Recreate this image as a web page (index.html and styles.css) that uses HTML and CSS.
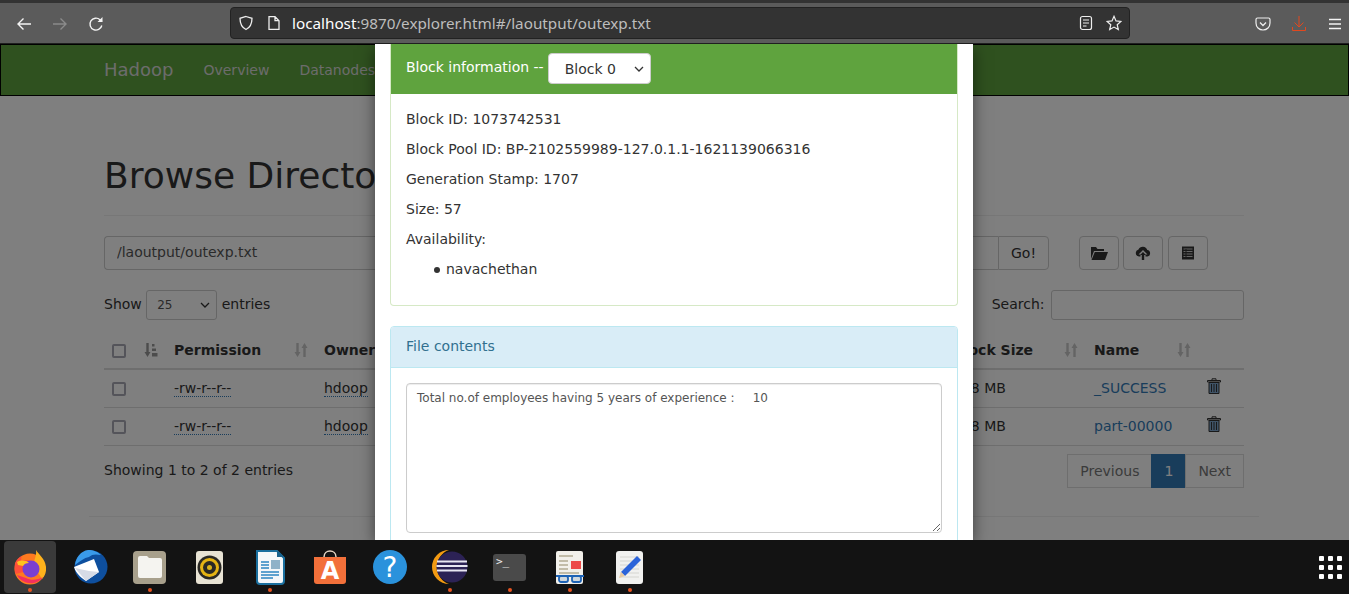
FILE: index.html
```html
<!DOCTYPE html>
<html>
<head>
<meta charset="utf-8">
<title>Browsing HDFS</title>
<link rel="stylesheet" href="styles.css">
</head>
<body>

<!-- browser toolbar -->
<div class="toolbar">
  <div class="toolbuttons">
    <svg class="tool" viewBox="0 0 16 16"><path d="M15 8H2M7.5 2.5 2 8l5.500 5.500" fill="none" stroke="#f4f4f4" stroke-width="1.400"/></svg>
    <svg class="tool" viewBox="0 0 16 16"><path d="M1 8h13M8.500 2.500 14 8l-5.500 5.500" fill="none" stroke="#8b8b8b" stroke-width="1.400"/></svg>
    <svg class="tool" viewBox="0 0 16 16"><path d="M13.800 9.500A6 6 0 1 1 12 3.700L14 5.500" fill="none" stroke="#f4f4f4" stroke-width="1.400"/><path d="M14.500 1v5h-5z" fill="#f4f4f4"/></svg>
  </div>
  <div class="urlbar">
    <svg class="urlicon" viewBox="0 0 16 16"><path d="M8 1.500 14 3.300c0 5.500-1.700 9.200-6 11.200C3.700 12.500 2 8.800 2 3.300z" fill="none" stroke="#eee" stroke-width="1.300"/></svg>
    <svg class="urlicon" viewBox="0 0 16 16"><path d="M3 1.700h6l4 4v8.600H3zM9 1.700v4h4" fill="none" stroke="#eee" stroke-width="1.300"/></svg>
    <div class="url"><b>localhost</b>:9870/explorer.html#/laoutput/outexp.txt</div>
    <svg class="urlicon" viewBox="0 0 16 16"><rect x="2.500" y="1.500" width="11" height="13" rx="2" fill="none" stroke="#eee" stroke-width="1.200"/><path d="M5 5h6M5 8h6M5 11h3.500" stroke="#eee" stroke-width="1.200"/></svg>
    <svg class="urlicon" viewBox="0 0 16 16"><path d="m8 1.300 2 4.600 4.900.5-3.700 3.300 1.100 4.900L8 12.100l-4.300 2.500 1.100-4.900L1.100 6.400 6 5.900z" fill="none" stroke="#eee" stroke-width="1.200"/></svg>
  </div>
  <div class="toolright">
    <svg class="tool" viewBox="0 0 16 16"><path d="M2.500 2h11A1.500 1.500 0 0 1 15 3.500V7c0 4-3 7-7 7S1 11 1 7V3.500A1.500 1.500 0 0 1 2.500 2z" fill="none" stroke="#eee" stroke-width="1.200"/><path d="m5 6.500 3 3 3-3" fill="none" stroke="#eee" stroke-width="1.300"/></svg>
    <svg class="tool" viewBox="0 0 16 16"><path d="M8 0v10.500M3.500 6.500 8 11l4.500-4.500M1.500 11v3.500h13V11" fill="none" stroke="#e2481e" stroke-width="1"/></svg>
    <svg class="tool" viewBox="0 0 16 16"><path d="M2 3.500h12M2 8h12M2 12.500h12" stroke="#f4f4f4" stroke-width="1.300"/></svg>
  </div>
</div>

<!-- page in the browser -->
<div class="page">
  <div class="navbar">
    <span class="brand">Hadoop</span>
    <span class="navlink">Overview</span>
    <span class="navlink">Datanodes</span>
  </div>

  <div class="container">
    <h1 class="pageheader">Browse Directory</h1>

    <div class="pathrow">
      <div class="pathgroup">
        <input class="pathinput" type="text" value="/laoutput/outexp.txt">
        <div class="gobutton">Go!</div>
      </div>
      <div class="iconbutton">
        <svg class="glyph" viewBox="0 0 18 14"><path d="M1 1h5l1.500 2H14v2H4L1 13zM4.800 6H18l-3 8H1.500z" fill="#333"/></svg>
      </div>
      <div class="iconbutton">
        <svg class="glyph" viewBox="0 0 16 14"><path d="M4 10.500A3.500 3.500 0 0 1 3.500 3.600 4.700 4.700 0 0 1 12.300 4 3.300 3.300 0 0 1 12.500 10.500H10.500V8.500h2L8 4 3.500 8.500h2v2z" fill="#333"/><path d="M8 6 11 9H9.200v5H6.800V9H5z" fill="#333"/></svg>
      </div>
      <div class="iconbutton lastbutton">
        <svg class="glyph" viewBox="0 0 14 14"><rect x="1" y="0.500" width="12" height="13" fill="#333"/><path d="M2.500 3h9M2.500 5.500h9M2.500 8h9M2.500 10.500h9" stroke="#ccc" stroke-width="1"/><path d="M5 3v9" stroke="#333"/></svg>
      </div>
    </div>

    <div class="tabletop">
      <div class="tableoption">Show
        <select class="lengthselect"><option>25</option></select>
        entries</div>
      <div class="tableoption">Search: <input class="searchinput" type="text"></div>
    </div>

    <table class="filetable">
      <colgroup>
        <col class="c1"><col class="c2"><col class="c3"><col class="c4"><col class="c5"><col class="c6"><col class="c7"><col class="c8">
      </colgroup>
      <thead>
        <tr>
          <th><input type="checkbox"></th>
          <th class="sortcell">
            <svg class="sorticon" viewBox="0 0 14 14"><path d="M3.500 0v10" stroke="#999" stroke-width="2.400"/><path d="M0.500 9h6L3.500 14zM8 1h2.500v2.500H8zM8 5.500h4v2.500H8zM8 10h5.500v3.500H8z" fill="#999"/></svg>
          </th>
          <th><div class="thcell">Permission<svg class="sorticon" viewBox="0 0 14 14"><path d="M3.500 0v10M10.500 14V4" stroke="#c8c8c8" stroke-width="2.400"/><path d="M0.500 9h6L3.500 14zM7.500 5h6L10.500 0z" fill="#c8c8c8"/></svg></div></th>
          <th>Owner</th>
          <th></th>
          <th><div class="thcell">Block Size<svg class="sorticon" viewBox="0 0 14 14"><path d="M3.500 0v10M10.500 14V4" stroke="#c8c8c8" stroke-width="2.400"/><path d="M0.500 9h6L3.500 14zM7.500 5h6L10.500 0z" fill="#c8c8c8"/></svg></div></th>
          <th><div class="thcell">Name<svg class="sorticon" viewBox="0 0 14 14"><path d="M3.500 0v10M10.500 14V4" stroke="#c8c8c8" stroke-width="2.400"/><path d="M0.500 9h6L3.500 14zM7.500 5h6L10.500 0z" fill="#c8c8c8"/></svg></div></th>
          <th></th>
        </tr>
      </thead>
      <tbody>
        <tr>
          <td><input type="checkbox"></td>
          <td></td>
          <td><span class="dotted">-rw-r--r--</span></td>
          <td><span class="dotted">hdoop</span></td>
          <td></td>
          <td>128 MB</td>
          <td><span class="filelink">_SUCCESS</span></td>
          <td><svg class="trash" viewBox="0 0 14 16"><path d="M5 2V.8h4V2M.5 2.500h13V4H.5z" fill="none" stroke="#333"/><path d="M2 4.500h10V15.500H2z" fill="#7ea6cf" stroke="#333"/><path d="M4.500 6v8M7 6v8M9.500 6v8" stroke="#333"/></svg></td>
        </tr>
        <tr>
          <td><input type="checkbox"></td>
          <td></td>
          <td><span class="dotted">-rw-r--r--</span></td>
          <td><span class="dotted">hdoop</span></td>
          <td></td>
          <td>128 MB</td>
          <td><span class="filelink">part-00000</span></td>
          <td><svg class="trash" viewBox="0 0 14 16"><path d="M5 2V.8h4V2M.5 2.500h13V4H.5z" fill="none" stroke="#333"/><path d="M2 4.500h10V15.500H2z" fill="#7ea6cf" stroke="#333"/><path d="M4.500 6v8M7 6v8M9.500 6v8" stroke="#333"/></svg></td>
        </tr>
      </tbody>
    </table>

    <div class="tablebottom">
      <div class="tableinfo">Showing 1 to 2 of 2 entries</div>
      <div class="pagination">
        <span class="pagebtn">Previous</span><span class="pagebtn current">1</span><span class="pagebtn">Next</span>
      </div>
    </div>
  </div>
  <div class="footerline"></div>

  <!-- modal on top of the dimmed page -->
  <div class="backdrop"></div>
  <div class="modal">
    <div class="panel success">
      <div class="panelhead greenhead">
        <span class="blocklabel">Block information --</span>
        <select class="blockselect"><option>Block 0</option></select>
      </div>
      <div class="panelbody">
        <p>Block ID: 1073742531</p>
        <p>Block Pool ID: BP-2102559989-127.0.1.1-1621139066316</p>
        <p>Generation Stamp: 1707</p>
        <p>Size: 57</p>
        <p>Availability:</p>
        <ul><li>navachethan</li></ul>
      </div>
    </div>
    <div class="panel info">
      <div class="panelhead bluehead">File contents</div>
      <div class="panelbody">
        <textarea class="contents">Total no.of employees having 5 years of experience :	10</textarea>
      </div>
    </div>
  </div>
</div>

<!-- ubuntu dock -->
<div class="dock">
  <div class="dockitem running selected">
    <svg class="dockicon" viewBox="0 0 36 36">
      <circle cx="18" cy="20" r="15.500" fill="#ff7a1f"/>
      <path d="M24 1c2 4 9 8 10 17 .500 5-1 9-4 12l-8-13c-1-6 3-9 2-16z" fill="#ffb21c"/>
      <path d="M3 14c2-4 4-6 7-7-1 2-1 3-.5 5 3-2 9-1 11 1l-9 10-8 2c-1-4-1-8-.5-11z" fill="#ff4f3a"/>
      <circle cx="19" cy="20" r="8.500" fill="#7a3fd0"/>
      <path d="M5 13c4-2 9-2 12 1-3 0-5 1-6 3l-5-1z" fill="#ffc21f"/>
      <path d="M5 26c3 6 10 9 17 8 4-1 7-3 9-6-5 3-12 4-17 1-3-1-6-2-9-3z" fill="#f3305f"/>
    </svg>
  </div>
  <div class="dockitem">
    <svg class="dockicon" viewBox="0 0 36 36">
      <circle cx="19" cy="18" r="16.500" fill="#0e4f9e"/>
      <path d="M3 16C4 8 9 2 16 1c6 0 10 2 13 5-5-1-9-1-12 2-5 1-9 4-14 8z" fill="#3a9bea"/>
      <path d="M2 18 22 10l5 13-13 9C8 28 4 24 2 18z" fill="#fff"/>
      <path d="M3 19l14 3 10 1-13 9z" fill="#d6dbe6"/>
    </svg>
  </div>
  <div class="dockitem running">
    <svg class="dockicon" viewBox="0 0 36 36">
      <rect x="1" y="2" width="33" height="33" rx="4" fill="#a8a08c"/>
      <path d="M6 9a2 2 0 0 1 2-2h7l2 2h11a2 2 0 0 1 2 2v16a2 2 0 0 1-2 2H8a2 2 0 0 1-2-2z" fill="#f5f4f0"/>
    </svg>
  </div>
  <div class="dockitem">
    <svg class="dockicon" viewBox="0 0 36 36">
      <rect x="4" y="2" width="27" height="33" rx="3" fill="#e8e3d4"/>
      <circle cx="17.500" cy="18.500" r="12" fill="#2a2925"/>
      <circle cx="17.500" cy="18.500" r="9.500" fill="#e5b414"/>
      <circle cx="17.500" cy="18.500" r="6.500" fill="#2a2925"/>
      <circle cx="17.500" cy="18.500" r="2.500" fill="#d9b31c"/>
    </svg>
  </div>
  <div class="dockitem running">
    <svg class="dockicon" viewBox="0 0 36 36">
      <path d="M5 2h20l7 7v23a3 3 0 0 1-3 3H8a3 3 0 0 1-3-3z" fill="#f4f7f9" stroke="#1a6f9e" stroke-width="2"/>
      <path d="M25 1l7 7h-7z" fill="#17618c"/>
      <path d="M9 13h8M9 16h8M9 19h8M9 23h18M9 26h18M9 29h12" stroke="#2d86c1" stroke-width="1.600"/>
      <rect x="19" y="11" width="9" height="9" fill="#8fb2c8"/>
    </svg>
  </div>
  <div class="dockitem">
    <svg class="dockicon" viewBox="0 0 36 36">
      <path d="M12 8c0-8 12-8 12 0" fill="none" stroke="#e4d5c4" stroke-width="1.500"/>
      <path d="M2 8h32v24a3 3 0 0 1-3 3H5a3 3 0 0 1-3-3z" fill="#f2703a"/>
      <text class="softa" x="18" y="30" text-anchor="middle">A</text>
    </svg>
  </div>
  <div class="dockitem">
    <svg class="dockicon" viewBox="0 0 36 36">
      <circle cx="18" cy="18" r="17" fill="#2a92dc"/>
      <text class="helpq" x="18" y="28" text-anchor="middle">?</text>
    </svg>
  </div>
  <div class="dockitem running">
    <svg class="dockicon" viewBox="0 0 36 36">
      <path d="M17 1A17 17 0 0 0 17 35 18 18 0 0 1 17 1z" fill="#f29a12"/>
      <circle cx="20" cy="18" r="15.500" fill="#2c2255"/>
      <path d="M5 12.500h30M4.500 17h31M5 21.500h30" stroke="#e8e6f2" stroke-width="1.800"/>
    </svg>
  </div>
  <div class="dockitem running">
    <svg class="dockicon" viewBox="0 0 36 36">
      <rect x="1" y="5" width="33" height="27" rx="3" fill="#4a4a4a"/>
      <text class="termtext" x="4" y="16">&gt;_</text>
    </svg>
  </div>
  <div class="dockitem running">
    <svg class="dockicon" viewBox="0 0 36 36">
      <rect x="4" y="2" width="27" height="33" rx="2" fill="#f2f0ea"/>
      <path d="M7 7h14M7 12h9M7 16h9M7 20h9M7 24h20" stroke="#b3aa92" stroke-width="1.500"/>
      <rect x="19" y="12" width="10" height="8" fill="#ec4a48"/>
      <path d="M4 27h28" stroke="#1e63b5" stroke-width="2"/>
      <rect x="7" y="27" width="9" height="6" rx="2" fill="#cfd8de" stroke="#1e63b5" stroke-width="1.800"/>
      <rect x="20" y="27" width="9" height="6" rx="2" fill="#cfd8de" stroke="#1e63b5" stroke-width="1.800"/>
    </svg>
  </div>
  <div class="dockitem running">
    <svg class="dockicon" viewBox="0 0 36 36">
      <rect x="4" y="2" width="27" height="33" rx="3" fill="#f1f1ef"/>
      <path d="M8 8h19M8 12h19M8 16h19M8 20h19M8 24h19M8 28h19" stroke="#d5d5d0"/>
      <path d="M25 7l4 4-16 16-4-4z" fill="#2b63d9"/>
      <path d="M9 23l4 4-6 2z" fill="#e8c9a0"/>
    </svg>
  </div>
  <div class="appgrid">
    <i></i><i></i><i></i><i></i><i></i><i></i><i></i><i></i><i></i>
  </div>
</div>

</body>
</html>
```

FILE: styles.css
```css
html, body
{
  margin: 0;
  padding: 0;
  height: 594px;
  overflow: hidden;
  font-family: "DejaVu Sans", sans-serif;
  font-size: 14px;
  line-height: 20px;
  color: #333;
  background-color: #fff;
}

/* Browser toolbar */

.toolbar
{
  box-sizing: border-box;
  height: 44px;
  display: flex;
  align-items: center;
  padding: 3px 0 1px 0;
  background-color: #5b5b5b;
  border-top: 3px solid #333;
  border-bottom: 1px solid #1f1f1f;
}

.toolbuttons
{
  width: 230px;
  display: flex;
  gap: 20px;
  padding-left: 16px;
  box-sizing: border-box;
}

.tool
{
  width: 16px;
  height: 16px;
}

.urlbar
{
  box-sizing: border-box;
  width: 900px;
  height: 32px;
  margin-top: -3px;
  display: flex;
  align-items: center;
  gap: 12px;
  padding: 0 7px 0 7px;
  background-color: #333;
  border: 1px solid #222;
  border-radius: 4px;
}

.urlicon
{
  width: 16px;
  height: 16px;
  flex: none;
}

.url
{
  flex: 1;
  margin-left: -2px;
  font-family: "Noto Sans", sans-serif;
  font-size: 15.250px;
  color: #bdbdbd;
}

.url b
{
  font-weight: normal;
  color: #fff;
}

.toolright
{
  flex: 1;
  display: flex;
  justify-content: flex-end;
  gap: 20px;
  padding-right: 6px;
}

/* Page */

.page
{
  position: relative;
  height: 496px;
  overflow: hidden;
  background-color: #fff;
}

.navbar
{
  box-sizing: border-box;
  height: 52px;
  display: flex;
  align-items: center;
  padding-left: 103px;
  gap: 30px;
  background-color: #5fa33e;
  border: 1px solid #000;
  white-space: nowrap;
}

.brand
{
  font-size: 18px;
  color: #d8d8d8;
}

.navlink
{
  color: #d8d8d8;
}

.container
{
  width: 1140px;
  margin-left: 104px;
}

.pageheader
{
  margin: 60px 0 20px 0;
  padding-bottom: 19px;
  font-size: 36px;
  line-height: 40px;
  font-weight: 500;
  border-bottom: 1px solid #eee;
}

.pathrow
{
  display: flex;
  gap: 4px;
}

.pathgroup
{
  display: flex;
  width: 945px;
  margin-right: 26px;
}

.pathinput
{
  box-sizing: border-box;
  flex: 1;
  height: 34px;
  padding: 5px 12px 7px 12px;
  font-family: inherit;
  font-size: 14px;
  color: #555;
  border: 1px solid #ccc;
  border-right: none;
  border-radius: 4px 0 0 4px;
}

.gobutton
{
  box-sizing: border-box;
  width: 51px;
  height: 34px;
  line-height: 32px;
  text-align: center;
  border: 1px solid #ccc;
  border-radius: 0 4px 4px 0;
}

.iconbutton
{
  box-sizing: border-box;
  width: 40px;
  height: 34px;
  display: flex;
  align-items: center;
  justify-content: center;
  border: 1px solid #ccc;
  border-radius: 4px;
}

.lastbutton
{
  margin-left: 1px;
}

.glyph
{
  width: 18px;
  height: 14px;
}

.tabletop
{
  display: flex;
  justify-content: space-between;
  align-items: center;
  margin-top: 20px;
  height: 30px;
}

.lengthselect
{
  box-sizing: border-box;
  width: 71px;
  height: 30px;
  margin: 0;
  padding: 0 14px 0 10px;
  appearance: none;
  font-family: inherit;
  font-size: 12px;
  color: #555;
  background: #fff url("data:image/svg+xml,%3Csvg xmlns='http://www.w3.org/2000/svg' width='10' height='6'%3E%3Cpath d='M1 1l4 4 4-4' fill='none' stroke='%23333' stroke-width='1.300'/%3E%3C/svg%3E") no-repeat right 6px center;
  border: 1px solid #ccc;
  border-radius: 3px;
}

.searchinput
{
  box-sizing: border-box;
  width: 193px;
  height: 30px;
  vertical-align: middle;
  margin-left: 2px;
  border: 1px solid #ccc;
  border-radius: 3px;
}

.filetable
{
  width: 1140px;
  margin-top: 12px;
  table-layout: fixed;
  border-collapse: collapse;
  white-space: nowrap;
}

.c1 { width: 32px; }
.c2 { width: 30px; }
.c3 { width: 150px; }
.c4 { width: 110px; }
.c5 { width: 519px; }
.c6 { width: 141px; }
.c7 { width: 113px; }
.c8 { width: 45px; }

.filetable th
{
  height: 36px;
  padding: 8px;
  box-sizing: border-box;
  text-align: left;
  border-bottom: 2px solid #ddd;
}

.filetable td
{
  height: 38px;
  padding: 0 8px;
  box-sizing: border-box;
  border-bottom: 1px solid #ddd;
}

.filetable input
{
  appearance: none;
  box-sizing: border-box;
  width: 14px;
  height: 14px;
  margin: 2px 0 0 0;
  display: block;
  background-color: #fff;
  border: 2px solid #a8a8b4;
  border-radius: 2px;
}

.thcell
{
  display: flex;
  justify-content: space-between;
  align-items: center;
}

.sorticon
{
  width: 14px;
  height: 14px;
  flex: none;
  display: block;
}

.dotted
{
  border-bottom: 1px dotted #337ab7;
}

.filelink
{
  color: #337ab7;
}

.trash
{
  width: 14px;
  height: 16px;
  display: block;
  margin-top: -4px;
}

.tablebottom
{
  display: flex;
  justify-content: space-between;
  margin-top: 8px;
}

.tableinfo
{
  padding-top: 6px;
}

.pagination
{
  display: flex;
}

.pagebtn
{
  box-sizing: border-box;
  height: 34px;
  padding: 6px 12px;
  color: #777;
  border: 1px solid #ddd;
  margin-left: -1px;
}

.pagebtn.current
{
  color: #fff;
  background-color: #337ab7;
  border-color: #337ab7;
}

.footerline
{
  width: 1170px;
  margin: 28px 0 0 89px;
  border-top: 1px solid #eee;
}

/* Modal */

.backdrop
{
  position: absolute;
  left: 0;
  top: 0;
  right: 0;
  bottom: 0;
  background-color: rgba(0, 0, 0, 0.5);
}

.modal
{
  position: absolute;
  left: 375px;
  top: 0;
  bottom: 0;
  width: 598px;
  box-sizing: border-box;
  padding: 0 15px;
  background-color: #fff;
  box-shadow: 0 5px 15px rgba(0, 0, 0, 0.5);
}

.panel
{
  margin-bottom: 20px;
  border: 1px solid #ddd;
  border-radius: 4px;
}

.panel.success
{
  border-color: #d6e9c6;
  border-top: none;
  border-radius: 0 0 4px 4px;
}

.panel.info
{
  border-color: #bce8f1;
}

.panelhead
{
  padding: 10px 15px;
}

.greenhead
{
  height: 50px;
  box-sizing: border-box;
  display: flex;
  align-items: center;
  gap: 4px;
  padding: 0 15px 1px 15px;
  color: #fff;
  background-color: #5fa33e;
}

.blocklabel
{
  padding-bottom: 4px;
}

.bluehead
{
  padding: 9px 15px 11px 15px;
  color: #31708f;
  background-color: #d9edf7;
  border-bottom: 1px solid #bce8f1;
  border-radius: 3px 3px 0 0;
}

.blockselect
{
  box-sizing: border-box;
  width: 103px;
  height: 31px;
  padding: 0 16px;
  appearance: none;
  font-family: inherit;
  font-size: 14px;
  color: #333;
  background: #fff url("data:image/svg+xml,%3Csvg xmlns='http://www.w3.org/2000/svg' width='10' height='6'%3E%3Cpath d='M1 1l4 4 4-4' fill='none' stroke='%23333' stroke-width='1.300'/%3E%3C/svg%3E") no-repeat right 6px center;
  border: 1px solid #ccc;
  border-radius: 4px;
}

.panelbody
{
  padding: 15px;
}

.panelbody p
{
  margin: 0 0 10px 0;
}

.panelbody ul
{
  margin: 0 0 11px 0;
  padding-left: 40px;
  list-style: none;
}

.panelbody li::before
{
  content: "";
  display: inline-block;
  width: 6px;
  height: 6px;
  margin: 0 6px 1px -12px;
  border-radius: 50%;
  background-color: #333;
}

.contents
{
  display: block;
  box-sizing: border-box;
  width: 100%;
  height: 150px;
  padding: 6px 10px;
  font-family: inherit;
  font-size: 12px;
  line-height: 17px;
  color: #555;
  border: 1px solid #ccc;
  border-radius: 4px;
  box-shadow: inset 0 1px 1px rgba(0, 0, 0, 0.075);
}

/* Dock */

.dock
{
  height: 54px;
  display: flex;
  padding-left: 4px;
  gap: 8px;
  background-color: #131313;
}

.dockitem
{
  box-sizing: border-box;
  width: 52px;
  height: 52px;
  margin-top: 1px;
  display: flex;
  align-items: center;
  justify-content: center;
  position: relative;
  border-radius: 4px;
}

.dockitem.selected
{
  background-color: #3a3a3a;
}

.dockitem.running::after
{
  content: "";
  position: absolute;
  left: 24px;
  bottom: 1px;
  width: 4px;
  height: 4px;
  border-radius: 50%;
  background-color: #e95420;
}

.dockicon
{
  width: 36px;
  height: 36px;
}

.softa
{
  font-family: "DejaVu Sans", sans-serif;
  font-size: 24px;
  font-weight: bold;
  fill: #fff;
}

.helpq
{
  font-family: "DejaVu Sans", sans-serif;
  font-size: 28px;
  fill: #fff;
}

.termtext
{
  font-family: "DejaVu Sans Mono", monospace;
  font-size: 11px;
  fill: #eee;
}

.appgrid
{
  margin-left: auto;
  margin-right: 7px;
  align-self: center;
  display: grid;
  grid-template-columns: repeat(3, 5px);
  gap: 4px;
}

.appgrid i
{
  display: block;
  width: 5px;
  height: 5px;
  background-color: #fff;
  border-radius: 1px;
}
```
